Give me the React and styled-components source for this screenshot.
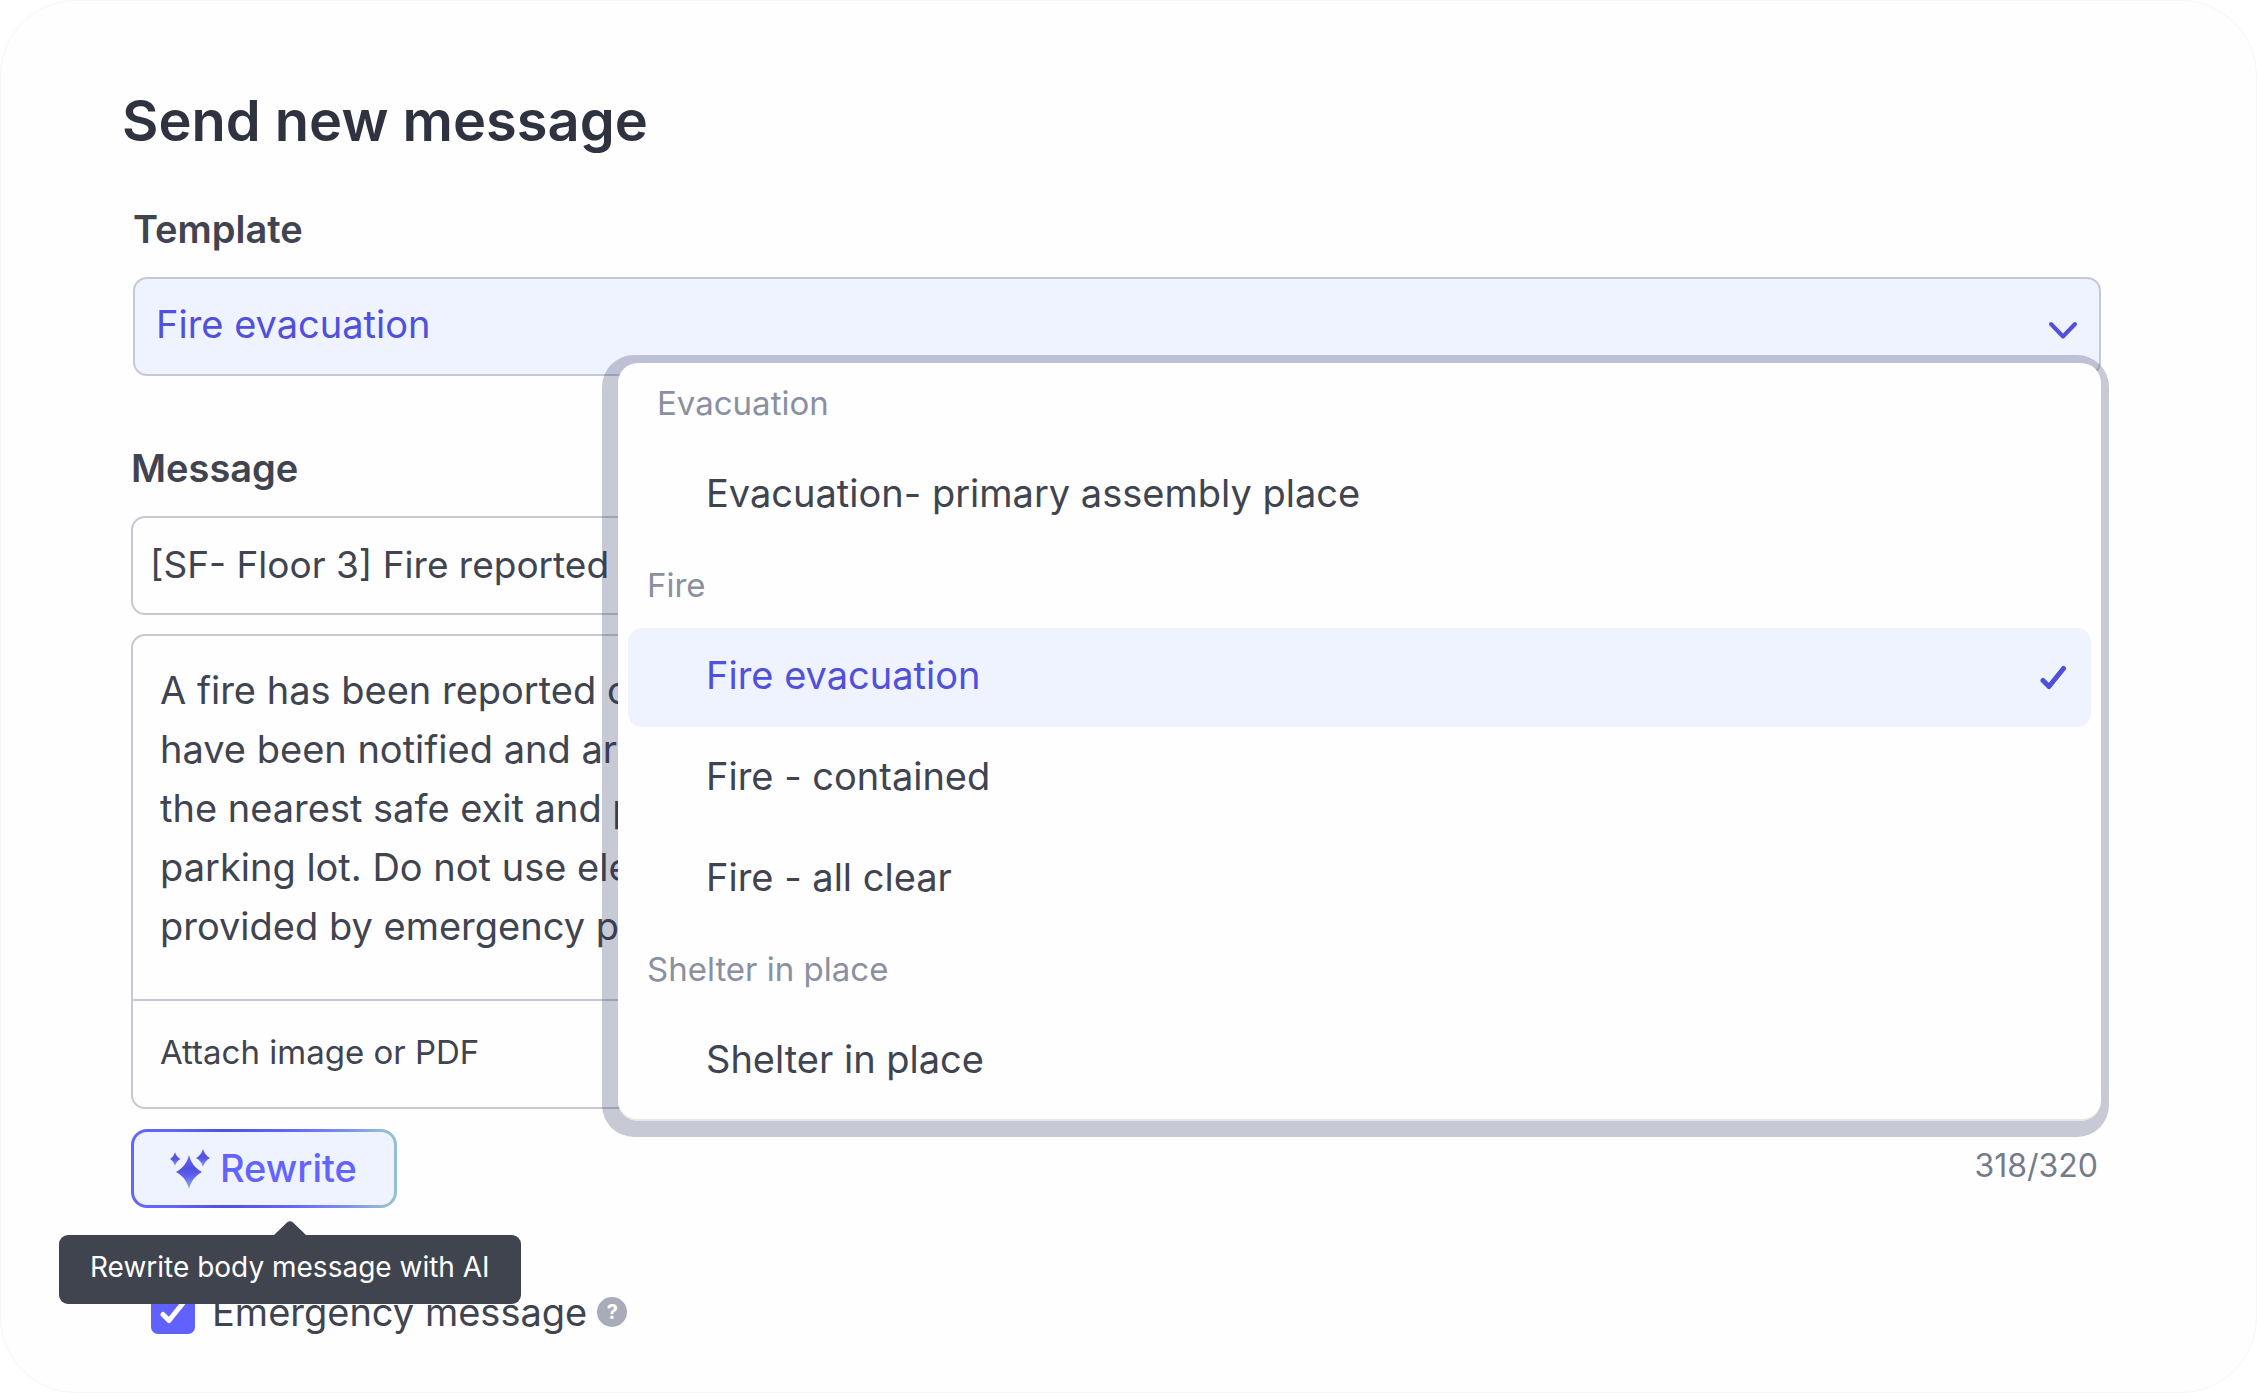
import { useState } from "react";
import styled, { createGlobalStyle } from "styled-components";

const GlobalStyle = createGlobalStyle`
  * {
    box-sizing: border-box;
  }
  body {
    margin: 0;
    background-color: #fff;
    color: #404450;
    font-family: Inter, "Liberation Sans", sans-serif;
    font-size: 38px;
    line-height: 46px;
  }
  button, input, select, textarea {
    font: inherit;
    color: inherit;
  }
`;

const Panel = styled.main`
  min-height: 100vh;
  padding: 85px 155px 55px 121px;
  border: 1px solid #f6f6f7;
  border-radius: 76px;
  background-color: #fefefe;
`;

const Title = styled.h1`
  margin: 0 0 50px;
  font-size: 56px;
  line-height: 70px;
  font-weight: 600;
  color: #2f3340;
`;

const Form = styled.form`
  padding-left: 9px;
`;

const Label = styled.label`
  display: block;
  margin-bottom: 25px;
  font-weight: 600;
`;

const TemplateField = styled.div`
  margin: 0 0 69px 2px;
`;

const SelectWrap = styled.div`
  position: relative;
`;

const Select = styled.select`
  display: block;
  width: 100%;
  height: 99px;
  padding: 0 21px 5px;
  border: 2px solid #c6c8d2;
  border-radius: 14px;
  background-color: #eff3ff;
  color: #5050dc;
  appearance: none;
`;

const SelectArrow = styled.svg`
  position: absolute;
  top: 44px;
  right: 23px;
  width: 30px;
  height: 20px;
  pointer-events: none;
`;

const Menu = styled.div`
  position: absolute;
  z-index: 1;
  top: 86px;
  left: 485px;
  right: 0;
  display: flex;
  flex-direction: column;
  gap: 2px;
  padding: 2px 10px 8px;
  border-bottom: 2px solid #e8e8ec;
  border-radius: 20px;
  background-color: #fefefe;
  box-shadow: -4px 4px 0 12px rgba(35, 43, 88, 0.25);
`;

const Group = styled.div`
  display: flex;
  flex-direction: column;
  gap: 2px;
`;

const GroupName = styled.div`
  height: 79px;
  padding-left: ${({ $inset }) => ($inset ? 29 : 19)}px;
  font-size: 33px;
  line-height: 76px;
  color: #8a90a0;
`;

const Option = styled.button`
  display: flex;
  justify-content: space-between;
  align-items: center;
  height: 99px;
  padding: 0 24px 0 78px;
  border: none;
  border-radius: 14px;
  background-color: ${({ $active }) => ($active ? "#eff3ff" : "transparent")};
  color: ${({ $active }) => ($active ? "#5050dc" : "#404450")};
  text-align: left;
  cursor: pointer;
  span {
    padding-bottom: 6px;
  }
  svg {
    width: 28px;
    height: 26px;
  }
`;

const TextInput = styled.input`
  display: block;
  width: 100%;
  height: 99px;
  margin-bottom: 19px;
  padding: 0 17px 3px;
  border: 2px solid #c6c8d2;
  border-radius: 14px;
  background-color: transparent;
  font-size: 37px;
`;

const Editor = styled.div`
  margin-bottom: 20px;
  border: 2px solid #c6c8d2;
  border-radius: 14px;
`;

const TextArea = styled.textarea`
  display: block;
  width: 100%;
  padding: 25px 27px 43px;
  border: none;
  border-bottom: 2px solid #c6c8d2;
  background-color: transparent;
  line-height: 59px;
  resize: none;
  overflow: hidden;
`;

const Attach = styled.button`
  display: block;
  height: 106px;
  padding: 0 27px 5px;
  border: none;
  background-color: transparent;
  font-size: 33px;
  cursor: pointer;
`;

const Actions = styled.div`
  display: flex;
  justify-content: space-between;
  margin-bottom: 81px;
`;

const RewriteWrap = styled.div`
  position: relative;
`;

const RewriteButton = styled.button`
  display: flex;
  align-items: center;
  gap: 8px;
  height: 79px;
  padding: 0 37px 2px 36px;
  border: 3px solid transparent;
  border-radius: 16px;
  background:
    linear-gradient(#eff3ff, #eff3ff) padding-box,
    linear-gradient(90deg, #6464ff 15%, #5050dc 35%, #6464ff 60%, #7b93ee 82%, #96bfd2 96%) border-box;
  color: #6363ff;
  font-weight: 500;
  cursor: pointer;
  svg {
    width: 42px;
    height: 42px;
  }
`;

const Tooltip = styled.div`
  position: absolute;
  z-index: 2;
  top: 106px;
  left: -72px;
  padding: 0 31px 4px;
  border-radius: 9px;
  background-color: #40444f;
  color: #fff;
  font-size: 28px;
  line-height: 65px;
  white-space: nowrap;
  svg {
    position: absolute;
    bottom: 100%;
    left: calc(50% - 16px);
    width: 32px;
    height: 14px;
  }
`;

const Counter = styled.div`
  padding: 14px 3px 0 0;
  font-size: 32px;
  color: #757c89;
`;

const EmergencyRow = styled.div`
  display: flex;
  align-items: center;
  padding-left: 20px;
`;

const CheckboxLabel = styled.label`
  display: flex;
  align-items: center;
  gap: 17px;
`;

const CheckboxWrap = styled.span`
  position: relative;
  display: flex;
  svg {
    position: absolute;
    top: 9px;
    left: 8px;
    width: 28px;
    height: 26px;
    pointer-events: none;
  }
`;

const Checkbox = styled.input`
  width: 44px;
  height: 44px;
  margin: 0;
  border: 3px solid #6161ff;
  border-radius: 7px;
  appearance: none;
  &:checked {
    background-color: #6161ff;
  }
`;

const Help = styled.button`
  width: 30px;
  height: 30px;
  margin-left: 10px;
  padding: 0;
  border: none;
  border-radius: 50%;
  background-color: #a9acb8;
  color: #fff;
  font-size: 20px;
  font-weight: 700;
  line-height: 30px;
`;

const GROUPS = [
  { name: "Evacuation", options: ["Evacuation- primary assembly place"] },
  { name: "Fire", options: ["Fire evacuation", "Fire - contained", "Fire - all clear"] },
  { name: "Shelter in place", options: ["Shelter in place"] },
];

const BODY = [
  "A fire has been reported on",
  "have been notified and are",
  "the nearest safe exit and proceed",
  "parking lot. Do not use elevators",
  "provided by emergency personnel",
].join("\n");

const Tick = ({ color }) => (
  <svg viewBox="0 0 28 26" fill="none" aria-hidden="true">
    <path
      d="M4 15.500 L10 21.500 L24.500 3.500"
      stroke={color}
      strokeWidth="5"
      strokeLinecap="round"
      strokeLinejoin="round"
    />
  </svg>
);

const Sparkles = () => (
  <svg viewBox="0 0 42 42" aria-hidden="true">
    <defs>
      <linearGradient id="spark" x1="0" y1="0" x2="0" y2="1">
        <stop offset="0" stopColor="#6464ff" />
        <stop offset="0.4" stopColor="#5050dc" />
        <stop offset="0.62" stopColor="#6060f4" />
        <stop offset="1" stopColor="#8fb6da" />
      </linearGradient>
    </defs>
    <path
      fill="url(#spark)"
      d="M19 8 C21 16 25 21 32 25 C25 29 21 34 19 42 C17 34 13 29 6 25 C13 21 17 16 19 8Z"
    />
    <path
      fill="url(#spark)"
      d="M5 5 C6 8.500 7.500 10.500 10.500 12 C7.500 13.500 6 15.500 5 19 C4 15.500 2.500 13.500 0 12 C2.500 10.500 4 8.500 5 5Z"
    />
    <path
      fill="url(#spark)"
      d="M33 2 C34.500 6.500 36.500 9 40 11 C36.500 13 34.500 15.500 33 20 C31.500 15.500 29.500 13 26 11 C29.500 9 31.500 6.500 33 2Z"
    />
  </svg>
);

const App = () => {
  const [template, setTemplate] = useState("Fire evacuation");
  const [subject, setSubject] = useState("[SF- Floor 3] Fire reported");
  const [body, setBody] = useState(BODY);
  const [emergency, setEmergency] = useState(true);

  return (
    <>
      <GlobalStyle />
      <Panel>
        <Title>Send new message</Title>
        <Form onSubmit={(e) => e.preventDefault()}>
          <TemplateField>
            <Label htmlFor="template">Template</Label>
            <SelectWrap>
              <Select id="template" value={template} onChange={(e) => setTemplate(e.target.value)}>
                {GROUPS.map((group) => (
                  <optgroup label={group.name} key={group.name}>
                    {group.options.map((name) => (
                      <option key={name}>{name}</option>
                    ))}
                  </optgroup>
                ))}
              </Select>
              <SelectArrow viewBox="0 0 30 20" fill="none" aria-hidden="true">
                <path
                  d="M3 3 L15 15.500 L27 3"
                  stroke="#5050dc"
                  strokeWidth="4"
                  strokeLinecap="round"
                  strokeLinejoin="round"
                />
              </SelectArrow>
              <Menu role="listbox" aria-label="Template">
                {GROUPS.map((group, i) => (
                  <Group role="group" aria-label={group.name} key={group.name}>
                    <GroupName $inset={i === 0}>{group.name}</GroupName>
                    {group.options.map((name) => (
                      <Option
                        type="button"
                        role="option"
                        key={name}
                        $active={name === template}
                        aria-selected={name === template}
                        onClick={() => setTemplate(name)}
                      >
                        <span>{name}</span>
                        {name === template && <Tick color="#5050dc" />}
                      </Option>
                    ))}
                  </Group>
                ))}
              </Menu>
            </SelectWrap>
          </TemplateField>

          <Label htmlFor="subject">Message</Label>
          <TextInput id="subject" value={subject} onChange={(e) => setSubject(e.target.value)} />
          <Editor>
            <TextArea
              rows={5}
              aria-label="Message body"
              value={body}
              onChange={(e) => setBody(e.target.value)}
            />
            <Attach type="button">Attach image or PDF</Attach>
          </Editor>

          <Actions>
            <RewriteWrap>
              <RewriteButton type="button" aria-describedby="rewrite-tip">
                <Sparkles />
                Rewrite
              </RewriteButton>
              <Tooltip role="tooltip" id="rewrite-tip">
                <svg viewBox="0 0 32 14" aria-hidden="true">
                  <path d="M0 14 L13 1.500 Q16 -1 19 1.500 L32 14Z" fill="#40444f" />
                </svg>
                Rewrite body message with AI
              </Tooltip>
            </RewriteWrap>
            <Counter>318/320</Counter>
          </Actions>

          <EmergencyRow>
            <CheckboxLabel>
              <CheckboxWrap>
                <Checkbox
                  type="checkbox"
                  checked={emergency}
                  onChange={(e) => setEmergency(e.target.checked)}
                />
                {emergency && <Tick color="#fff" />}
              </CheckboxWrap>
              Emergency message
            </CheckboxLabel>
            <Help type="button">?</Help>
          </EmergencyRow>
        </Form>
      </Panel>
    </>
  );
};

export default App;
